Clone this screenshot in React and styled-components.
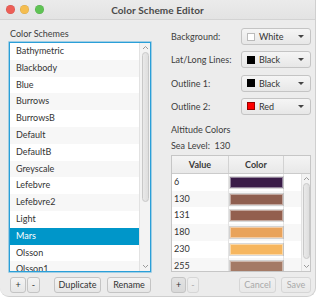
import React from "react";
import styled, { createGlobalStyle, css } from "styled-components";

const GlobalStyle = createGlobalStyle`
  html, body { margin: 0; padding: 0; background: #ffffff; }
  body { font-family: Lato, "Open Sans", sans-serif; color: #333; }
  * { box-sizing: border-box; }
`;

const Window = styled.div`
  width: 316px;
  height: 297px;
  background: #ececec;
  border-right: 1px solid #cfcfcf;
  border-bottom: 1px solid #cfcfcf;
  border-radius: 0 0 9px 9px;
  overflow: hidden;
  display: flex;
  flex-direction: column;
`;

const TitleBar = styled.div`
  height: 20px;
  flex: none;
  display: grid;
  grid-template-columns: 1fr auto 1fr;
  align-items: center;
  background: linear-gradient(#ebebeb, #e3e3e3);
  border-bottom: 1px solid #d3d3d3;
`;

const Lights = styled.div`
  display: flex;
  gap: 5.5px;
  padding-left: 5.5px;
`;

const Light = styled.span`
  width: 9px;
  height: 9px;
  border-radius: 50%;
  background: ${(p) => p.$c};
  box-shadow: inset 0 0 0 0.5px rgba(0, 0, 0, 0.12);
`;

const Title = styled.div`
  font-weight: 700;
  font-size: 10px;
  color: #4a4a4a;
  letter-spacing: 0.1px;
`;

const Body = styled.div`
  display: flex;
  gap: 20px;
  padding-left: 9px;
`;

const LeftCol = styled.div`
  width: 142px;
  display: flex;
  flex-direction: column;
`;

const RightCol = styled.div`
  width: 140px;
  display: flex;
  flex-direction: column;
`;

const Label = styled.div`
  font-size: 9px;
  line-height: 14px;
  height: 14px;
  color: #3c3c3c;
  padding-left: ${(p) => p.$pl || 0}px;
  margin-top: ${(p) => p.$mt || 0}px;
  white-space: pre;
`;

const ListBox = styled.div`
  margin-top: 1px;
  height: 230px;
  background: #fff;
  border: 1px solid #2a9fd8;
  box-shadow: 0 0 0 0.7px rgba(42, 159, 216, 0.55);
  display: flex;
  overflow: hidden;
`;

const ListItems = styled.div`
  flex: 1;
  overflow: hidden;
`;

const Row = styled.div`
  height: 16.8px;
  line-height: 16.8px;
  padding-left: 6px;
  font-size: 9px;
  color: ${(p) => (p.$sel ? "#fff" : "#333")};
  background: ${(p) => (p.$sel ? "#0096c9" : p.$odd ? "#f7f7f7" : "#fff")};
  white-space: nowrap;
`;

const ScrollBar = styled.div`
  width: ${(p) => p.$w}px;
  flex: none;
  background: #f3f3f3;
  border-left: 1px solid #e2e2e2;
  display: flex;
  flex-direction: column;
  align-items: center;
`;

const Arrow = styled.div`
  height: 9px;
  flex: none;
  display: flex;
  align-items: center;
  justify-content: center;
`;

const Thumb = styled.div`
  width: 7px;
  border-radius: 4px;
  border: 1px solid #c8c8c8;
  background: linear-gradient(90deg, #e9e9e9, #dedede);
  margin-top: 0px;
`;

const BtnRow = styled.div`
  display: flex;
  margin-top: ${(p) => p.$mt || 5}px;
  height: 16px;
`;

const Button = styled.div`
  width: ${(p) => p.$w}px;
  margin-left: ${(p) => p.$ml || 0}px;
  height: 16px;
  border: 1px solid #c4c4c4;
  border-radius: 3px;
  background: ${(p) =>
    p.$pressed
      ? "linear-gradient(#e2e2e2, #d9d9d9)"
      : "linear-gradient(#f4f4f4, #e6e6e6)"};
  font-size: 9px;
  line-height: 14px;
  text-align: center;
  color: ${(p) => (p.$disabled ? "#a9a9a9" : "#333")};
  ${(p) =>
    p.$disabled &&
    css`
      border-color: #d6d6d6;
      background: linear-gradient(#f0f0f0, #e9e9e9);
    `}
`;

const Form = styled.div`
  margin-top: 8px;
  display: flex;
  flex-direction: column;
  gap: 6.3px;
`;

const FormRow = styled.div`
  display: flex;
  align-items: center;
  height: 17px;
`;

const FormLabel = styled.div`
  flex: 1;
  font-size: 9px;
  color: #3c3c3c;
`;

const Combo = styled.div`
  width: 70px;
  height: 17px;
  border: 1px solid #c4c4c4;
  border-radius: 3px;
  background: linear-gradient(#f5f5f5, #e7e7e7);
  display: flex;
  align-items: center;
  padding-left: 5px;
  padding-right: 6px;
  font-size: 9px;
  color: #333;
`;

const Swatch = styled.span`
  width: 8px;
  height: 8px;
  background: ${(p) => p.$c};
  border: 0.5px solid ${(p) => (p.$c === "#ffffff" ? "#bbb" : "rgba(0,0,0,0.4)")};
  margin-right: 4px;
  flex: none;
`;

const ComboText = styled.span`
  flex: 1;
`;

const Caret = styled.span`
  width: 0;
  height: 0;
  border-left: 3px solid transparent;
  border-right: 3px solid transparent;
  border-top: 3px solid #444;
`;

const Table = styled.div`
  margin-top: 2px;
  height: 117px;
  border: 1px solid #c6c6c6;
  background: #fff;
  display: flex;
  flex-direction: column;
  overflow: hidden;
`;

const cols = "57px 55px 1fr";

const Header = styled.div`
  height: 18px;
  flex: none;
  display: grid;
  grid-template-columns: ${cols};
  background: linear-gradient(#f4f4f4, #e8e8e8);
  border-bottom: 1px solid #cbcbcb;
`;

const HeadCell = styled.div`
  font-size: 9px;
  font-weight: 700;
  color: #3a3a3a;
  text-align: center;
  line-height: 17px;
  border-right: ${(p) => (p.$last ? "none" : "1px solid #d2d2d2")};
`;

const TableBody = styled.div`
  flex: 1;
  display: flex;
  overflow: hidden;
`;

const TRows = styled.div`
  flex: 1;
  overflow: hidden;
`;

const TRow = styled.div`
  height: 16.8px;
  display: grid;
  grid-template-columns: 57px 55px 1fr;
  background: ${(p) => (p.$odd ? "#f7f7f7" : "#fff")};
`;

const TCell = styled.div`
  font-size: 9px;
  line-height: 16.8px;
  padding-left: 2px;
  color: #333;
  border-right: ${(p) => (p.$last ? "none" : "1px solid #e4e4e4")};
  display: flex;
  align-items: center;
`;

const ColorBar = styled.div`
  margin-left: -1px;
  width: 53px;
  height: 11px;
  background: ${(p) => p.$c};
  border: 1px solid rgba(255, 255, 255, 0.45);
  outline: 0.5px solid rgba(0, 0, 0, 0.15);
`;

const Up = () => (
  <svg width="7" height="5" viewBox="0 0 7 5">
    <polyline points="1,4 3.5,1.5 6,4" fill="none" stroke="#9a9a9a" strokeWidth="1" />
  </svg>
);
const Down = () => (
  <svg width="7" height="5" viewBox="0 0 7 5">
    <polyline points="1,1 3.5,3.5 6,1" fill="none" stroke="#9a9a9a" strokeWidth="1" />
  </svg>
);

const schemes = [
  "Bathymetric",
  "Blackbody",
  "Blue",
  "Burrows",
  "BurrowsB",
  "Default",
  "DefaultB",
  "Greyscale",
  "Lefebvre",
  "Lefebvre2",
  "Light",
  "Mars",
  "Olsson",
  "Olsson1",
];

const altitudes = [
  ["6", "#3a1c48"],
  ["130", "#8f5f50"],
  ["131", "#935f4e"],
  ["180", "#e9a35b"],
  ["230", "#f6b65f"],
  ["255", "#a47a66"],
];

const combos = [
  ["Background:", "#ffffff", "White"],
  ["Lat/Long Lines:", "#000000", "Black"],
  ["Outline 1:", "#000000", "Black"],
  ["Outline 2:", "#ff0000", "Red"],
];

export default function App() {
  return (
    <>
      <GlobalStyle />
      <Window>
        <TitleBar>
          <Lights>
            <Light $c="#ed5e56" />
            <Light $c="#f5bd4f" />
            <Light $c="#5fc354" />
          </Lights>
          <Title>Color Scheme Editor</Title>
          <div />
        </TitleBar>
        <Body>
          <LeftCol>
            <Label $mt={7} $pl={1}>Color Schemes</Label>
            <ListBox>
              <ListItems>
                {schemes.map((s, i) => (
                  <Row key={s} $odd={i % 2 === 1} $sel={s === "Mars"}>
                    {s}
                  </Row>
                ))}
              </ListItems>
              <ScrollBar $w={11}>
                <Arrow><Up /></Arrow>
                <Thumb style={{ height: 150 }} />
                <div style={{ flex: 1 }} />
                <Arrow><Down /></Arrow>
              </ScrollBar>
            </ListBox>
            <BtnRow $mt={5}>
              <Button $w={16} $ml={1}>+</Button>
              <Button $w={13} $ml={1}>-</Button>
              <Button $w={47} $ml={14}>Duplicate</Button>
              <Button $w={44} $ml={6}>Rename</Button>
            </BtnRow>
          </LeftCol>
          <RightCol>
            <Form>
              {combos.map(([l, c, t]) => (
                <FormRow key={l}>
                  <FormLabel>{l}</FormLabel>
                  <Combo>
                    <Swatch $c={c} />
                    <ComboText>{t}</ComboText>
                    <Caret />
                  </Combo>
                </FormRow>
              ))}
            </Form>
            <Label $mt={8}>Altitude Colors</Label>
            <Label $mt={2}>{"Sea Level:  130"}</Label>
            <Table>
              <Header>
                <HeadCell>Value</HeadCell>
                <HeadCell>Color</HeadCell>
                <HeadCell $last />
              </Header>
              <TableBody>
                <TRows>
                  {altitudes.map(([v, c], i) => (
                    <TRow key={v} $odd={i % 2 === 1}>
                      <TCell>{v}</TCell>
                      <TCell>
                        <ColorBar $c={c} />
                      </TCell>
                      <TCell $last />
                    </TRow>
                  ))}
                </TRows>
                <ScrollBar $w={9}>
                  <Arrow><Up /></Arrow>
                  <Thumb style={{ height: 76 }} />
                  <div style={{ flex: 1 }} />
                  <Arrow><Down /></Arrow>
                </ScrollBar>
              </TableBody>
            </Table>
            <BtnRow $mt={5}>
              <Button $w={15} $pressed>+</Button>
              <Button $w={12} $ml={1} $disabled>-</Button>
              <Button $w={37} $ml={40} $disabled>Cancel</Button>
              <Button $w={30} $ml={5} $disabled>Save</Button>
            </BtnRow>
          </RightCol>
        </Body>
      </Window>
    </>
  );
}
